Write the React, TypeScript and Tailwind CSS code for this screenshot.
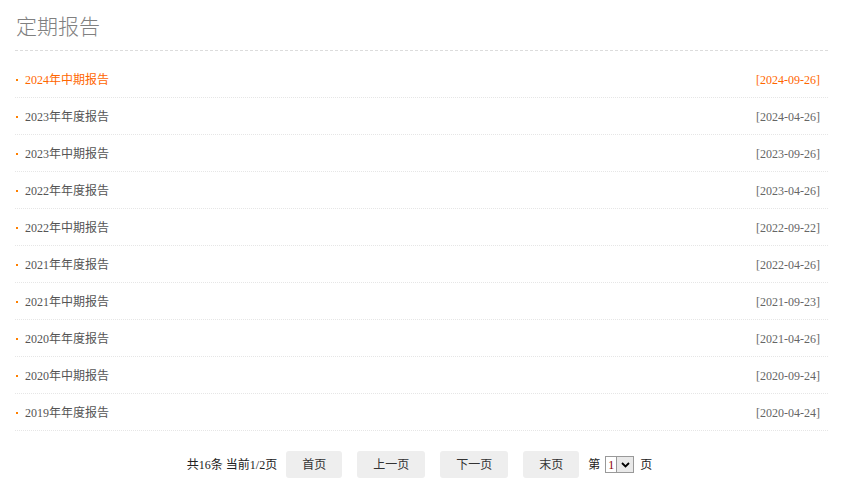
import React from "react"

const rows = [
  { title: "2024年中期报告", date: "2024-09-26", active: true },
  { title: "2023年年度报告", date: "2024-04-26" },
  { title: "2023年中期报告", date: "2023-09-26" },
  { title: "2022年年度报告", date: "2023-04-26" },
  { title: "2022年中期报告", date: "2022-09-22" },
  { title: "2021年年度报告", date: "2022-04-26" },
  { title: "2021年中期报告", date: "2021-09-23" },
  { title: "2020年年度报告", date: "2021-04-26" },
  { title: "2020年中期报告", date: "2020-09-24" },
  { title: "2019年年度报告", date: "2020-04-24" },
]

const font = { fontFamily: '"Liberation Serif", "Noto Sans CJK SC", serif' }

export default function App() {
  return (
    <div className="w-[842px] h-[481px] bg-white pl-[15px] pr-[14px]" style={font}>
      <div className="h-[51px] border-b border-dashed border-[#dcdcdc] flex items-center pl-px">
        <h1 className="text-[21px] font-light text-[#808080] leading-none pt-[5px]">定期报告</h1>
      </div>
      <ul className="mt-[10px]">
        {rows.map((r, i) => (
          <li
            key={i}
            className="h-[37px] border-b border-dotted border-[#e6e6e6] flex items-center justify-between text-[12px] pr-[8px] pt-[2px]"
          >
            <div className="flex items-center">
              <span className="w-[2px] h-[2px] bg-[#ff8000] ml-px mr-[7px]"></span>
              <span className={r.active ? "text-[#ff6600]" : "text-[#555]"}>{r.title}</span>
            </div>
            <span className={r.active ? "text-[#ff6600]" : "text-[#666]"}>[{r.date}]</span>
          </li>
        ))}
      </ul>
      <div className="mt-[20px] flex items-center justify-center text-[12px] text-[#222] pr-[4px]">
        <span className="mr-[9px]">共16条 当前1/2页</span>
        <button className="w-[56px] h-[27px] bg-[#eeeeee] rounded-[3px] text-[#333] mr-[15px]">首页</button>
        <button className="w-[68px] h-[27px] bg-[#eeeeee] rounded-[3px] text-[#333] mr-[15px]">上一页</button>
        <button className="w-[68px] h-[27px] bg-[#eeeeee] rounded-[3px] text-[#333] mr-[15px]">下一页</button>
        <button className="w-[56px] h-[27px] bg-[#eeeeee] rounded-[3px] text-[#333] mr-[9px]">末页</button>
        <span className="mr-[5px]">第</span>
        <div className="flex items-center h-[17px] border border-[#999] bg-white mr-[6px]">
          <span className="px-[2px] text-[#8b0000] leading-none">1</span>
          <span className="w-[17px] h-[15px] border-l border-[#999] bg-[#e9e9e9] flex items-center justify-center">
            <svg width="9" height="6" viewBox="0 0 9 6">
              <path d="M1 1 L4.5 4.5 L8 1" stroke="#000" strokeWidth="1.8" fill="none" />
            </svg>
          </span>
        </div>
        <span>页</span>
      </div>
    </div>
  )
}
